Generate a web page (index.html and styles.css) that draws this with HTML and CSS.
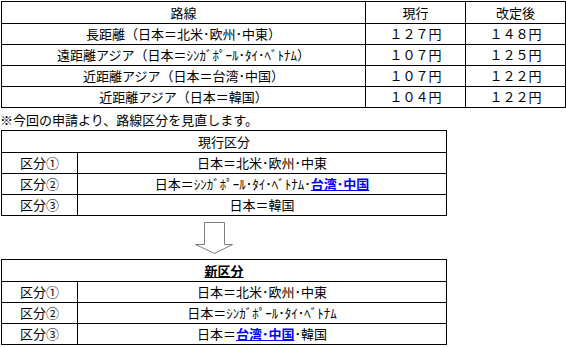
FILE: index.html
```html
<!DOCTYPE html>
<html lang="ja">
<head>
<meta charset="utf-8">
<title>路線区分</title>
<link rel="stylesheet" href="styles.css">
</head>
<body>
<div class="page">
  <table class="grid fares">
    <colgroup><col class="c-route"><col class="c-num"><col class="c-num"></colgroup>
    <tr class="head"><td>路線</td><td>現行</td><td>改定後</td></tr>
    <tr><td>長距離（日本＝北米･欧州･中東）</td><td>１２７円</td><td>１４８円</td></tr>
    <tr><td>遠距離アジア（日本＝ｼﾝｶﾞﾎﾟｰﾙ･ﾀｲ･ﾍﾞﾄﾅﾑ）</td><td>１０７円</td><td>１２５円</td></tr>
    <tr><td>近距離アジア（日本＝台湾･中国）</td><td>１０７円</td><td>１２２円</td></tr>
    <tr><td>近距離アジア（日本＝韓国）</td><td>１０４円</td><td>１２２円</td></tr>
  </table>

  <p class="note">※今回の申請より、路線区分を見直します。</p>

  <table class="grid zones">
    <colgroup><col class="c-label"><col class="c-area"></colgroup>
    <tr class="head"><td colspan="2">現行区分</td></tr>
    <tr><td>区分①</td><td>日本＝北米･欧州･中東</td></tr>
    <tr><td>区分②</td><td>日本＝ｼﾝｶﾞﾎﾟｰﾙ･ﾀｲ･ﾍﾞﾄﾅﾑ･<a class="hl" href="#">台湾･中国</a></td></tr>
    <tr><td>区分③</td><td>日本＝韓国</td></tr>
  </table>

  <div class="arrow-row">
    <svg class="arrow" width="40" height="34" viewBox="0 0 40 34" aria-hidden="true">
      <path d="M10.5 1.5 H30.5 V23.5 H38.5 L20.5 32.5 L1.5 23.5 H10.5 Z" fill="#ffffff" stroke="#7f7f7f" stroke-width="1"/>
    </svg>
  </div>

  <table class="grid zones">
    <colgroup><col class="c-label"><col class="c-area"></colgroup>
    <tr class="head"><td colspan="2"><span class="new-title">新区分</span></td></tr>
    <tr><td>区分①</td><td>日本＝北米･欧州･中東</td></tr>
    <tr><td>区分②</td><td>日本＝ｼﾝｶﾞﾎﾟｰﾙ･ﾀｲ･ﾍﾞﾄﾅﾑ</td></tr>
    <tr><td>区分③</td><td>日本＝<a class="hl" href="#">台湾･中国</a>･韓国</td></tr>
  </table>
</div>
</body>
</html>
```

FILE: styles.css
```css
html, body {
  margin: 0;
  padding: 0;
  background: #ffffff;
}

body {
  font-family: "Noto Sans CJK JP", "Noto Sans", sans-serif;
  font-size: 13px;
  color: #000000;
}

.page {
  padding: 1px 0 0 1px;
}

.grid {
  border-collapse: separate;
  border-spacing: 1px;
  background: #000000;
  table-layout: fixed;
}

.grid td {
  background: #ffffff;
  padding: 0;
  height: 20px;
  line-height: 20px;
  text-align: center;
  white-space: nowrap;
  overflow: hidden;
}

.grid tr.head td {
  height: 21px;
  line-height: 21px;
}

.fares {
  width: 565px;
}

.c-route { width: 363px; }
.c-num { width: 99px; }

.zones {
  width: 446px;
}

.c-label { width: 75px; }
.c-area { width: 368px; }

.note {
  margin: 0 0 0 -1px;
  height: 22px;
  line-height: 24px;
  white-space: nowrap;
}

.hl {
  color: #0000ff;
  font-weight: bold;
  text-decoration: underline;
}

.new-title {
  font-weight: bold;
  text-decoration: underline;
}

.arrow-row {
  height: 43px;
  display: flex;
  align-items: flex-start;
}

.arrow {
  display: block;
  margin: 5px 0 0 193px;
}
```
